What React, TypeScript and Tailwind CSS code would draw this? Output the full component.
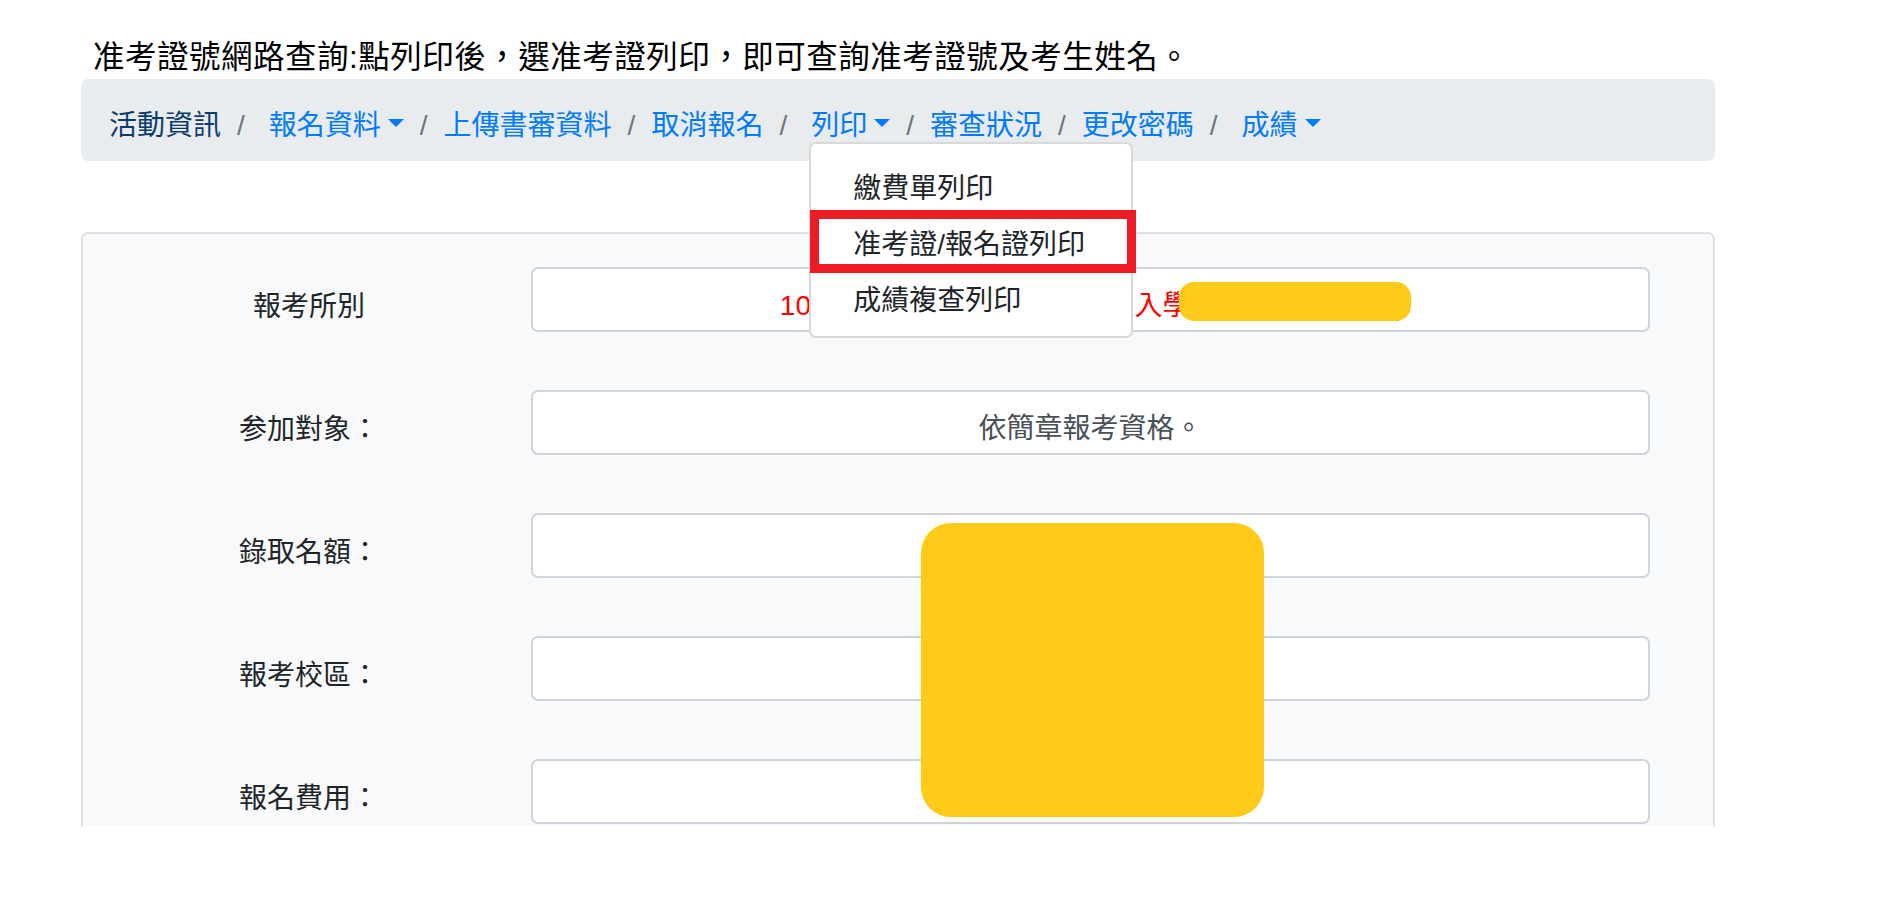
import React from "react";

type NavItem = {
  label: string;
  active?: boolean;
  dropdown?: boolean;
  open?: boolean;
};

const navItems: NavItem[] = [
  { label: "活動資訊", active: true },
  { label: "報名資料", dropdown: true },
  { label: "上傳書審資料" },
  { label: "取消報名" },
  { label: "列印", dropdown: true, open: true },
  { label: "審查狀況" },
  { label: "更改密碼" },
  { label: "成績", dropdown: true },
];

const printMenu = ["繳費單列印", "准考證/報名證列印", "成績複查列印"];

const rows: { label: string; value?: string; red?: boolean }[] = [
  { label: "報考所別", value: "109學年度碩士在職專班招生入學考試(資訊管理系)", red: true },
  { label: "参加對象：", value: "依簡章報考資格。" },
  { label: "錄取名額：" },
  { label: "報考校區：" },
  { label: "報名費用：" },
];

function Caret() {
  return (
    <span className="ml-[7px] mb-[6px] inline-block h-0 w-0 border-x-[8px] border-t-[8px] border-x-transparent border-t-[#007bff]" />
  );
}

function PrintDropdown() {
  return (
    <div className="absolute left-[-2px] top-[37px] z-10 w-[324px] rounded-[7px] border-2 border-[rgba(0,0,0,0.15)] bg-white py-[12px]">
      {printMenu.map((m) => (
        <div
          key={m}
          className="h-[56px] whitespace-nowrap pb-[2px] pl-[42px] pt-[12px] text-[28px] leading-[42px] text-[#212529]"
        >
          {m}
        </div>
      ))}
      {/* annotation box around the admission ticket item */}
      <div className="absolute left-[-1px] top-[66px] h-[63px] w-[326px] border-[9px] border-[#ed1c24]" />
    </div>
  );
}

export default function App() {
  return (
    <div className="relative h-[901px] w-[1883px] overflow-hidden bg-white font-['Liberation_Sans','Noto_Sans_CJK_TC',sans-serif]">
      <div className="w-[1715px] pl-[81px] pt-[35px]">
        <p className="whitespace-nowrap pl-[12px] text-[31.5px] leading-[44px] tracking-[0.5px] text-black">
          准考證號網路查詢:點列印後，選准考證列印，即可查詢准考證號及考生姓名。
        </p>

        <nav className="flex h-[82px] items-center rounded-[7px] bg-[#e9ecef] px-[28px] pt-[11px] text-[28px] leading-[42px]">
          {navItems.map((item, i) => (
            <React.Fragment key={item.label}>
              {i > 0 && <span className="px-[16px] text-[#6c757d]">/</span>}
              <span
                className={
                  "relative flex items-center whitespace-nowrap " +
                  (item.dropdown ? "ml-[8px] " : "") +
                  (item.active ? "text-[#0d3a6e]" : "text-[#007bff]")
                }
              >
                {item.label}
                {item.dropdown && <Caret />}
                {item.open && <PrintDropdown />}
              </span>
            </React.Fragment>
          ))}
        </nav>

        <div className="mt-[71px] h-[594px] overflow-hidden rounded-t-[7px] border-2 border-b-0 border-[#dfe1e4] bg-[#f8f9fa] pt-[33px]">
          <div className="flex flex-col gap-[58px]">
            {rows.map((r) => (
              <div key={r.label} className="grid grid-cols-[448px_1119px] items-center">
                <div className="pl-[4px] pt-[14px] text-center text-[28px] leading-[42px] text-[#212529]">
                  {r.label}
                </div>
                <div
                  className={
                    "flex h-[65px] items-center justify-center whitespace-nowrap rounded-[7px] border-2 border-[#ced4da] bg-white pt-[12px] text-[28px] leading-[42px] " +
                    (r.red ? "pl-[4px] text-[#ff0000]" : "text-[#495057]")
                  }
                >
                  {r.value ?? ""}
                </div>
              </div>
            ))}
          </div>
        </div>
      </div>

      {/* privacy masks */}
      <div className="absolute left-[1179px] top-[282px] z-20 h-[39px] w-[232px] rounded-[15px] bg-[#ffca18]" />
      <div className="absolute left-[921px] top-[523px] z-20 h-[294px] w-[343px] rounded-[30px] bg-[#ffca18]" />
    </div>
  );
}
